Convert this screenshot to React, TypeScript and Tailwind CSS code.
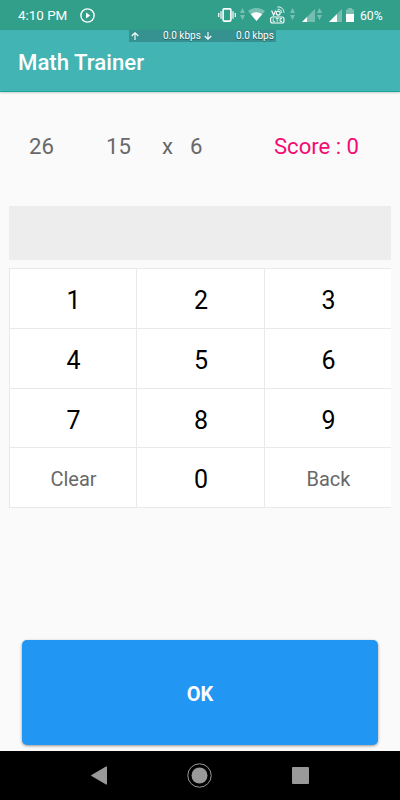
import { useState } from 'react'

const KEYS = ['1', '2', '3', '4', '5', '6', '7', '8', '9', 'Clear', '0', 'Back']

function DataArrows({ className }: { className: string }) {
  return (
    <svg viewBox="0 0 5 12" className={`h-3 w-[5px] shrink-0 text-white/35 ${className}`} fill="currentColor">
      <path d="M0 5 2.5 0 5 5zM0 7h5L2.5 12z" />
    </svg>
  )
}

function SignalIcon({ level, className }: { level: number; className: string }) {
  return (
    <svg viewBox="0 0 13 13" className={`mt-[9px] h-[13px] w-[13px] shrink-0 ${className}`} fill="#fff">
      <path d="M0 13 13 0v13z" opacity=".32" />
      <path d={`M0 13 ${level} ${13 - level}V13z`} />
    </svg>
  )
}

function StatusBar() {
  return (
    <div className="flex h-[30px] shrink-0 items-start bg-[#329f8b] text-white">
      <span className="ml-[18px] mt-[7px] w-[50px] whitespace-nowrap text-[13.4px] leading-[18px]">4:10 PM</span>
      <svg viewBox="0 0 15 15" className="ml-3 mt-[8px] h-[15px] w-[15px] shrink-0" fill="none" stroke="#fff" strokeWidth="1.4">
        <circle cx="7.5" cy="7.5" r="6.6" />
        <path d="M6 4.4v6.2l4.2-3.1z" fill="#fff" stroke="none" />
      </svg>

      {/* Vibrate */}
      <svg viewBox="0 0 18 14" className="ml-[123px] mt-2 h-[14px] w-[18px] shrink-0" fill="none" stroke="#fff" strokeWidth="1.2">
        <rect x="5.1" y=".9" width="7.8" height="12.2" rx="1" strokeWidth="1.6" />
        <path d="M.7 5v4M3 3.2v7.6M15 3.2v7.6M17.3 5v4" />
      </svg>
      <DataArrows className="ml-1 mt-2" />

      {/* Wifi */}
      <svg viewBox="0 0 17 13" className="ml-[3px] mt-[8px] h-[13px] w-[17px] shrink-0" fill="#fff">
        <path d="M0 3C5-1 12-1 17 3L8.5 13z" opacity=".35" />
        <path d="M2.8 6.2c3.5-2.7 7.9-2.7 11.4 0L8.5 13z" />
      </svg>

      {/* VoLTE */}
      <svg viewBox="0 0 15 18" className="ml-[5px] mt-[6px] h-[18px] w-[15px] shrink-0" fill="none" stroke="#fff" strokeWidth="1.1">
        <path d="M1.6 4.5 3.6 9.3 5.6 4.5" />
        <circle cx="8.2" cy="7.1" r="2" />
        <path d="M7.6 3.2c2.5-.2 4 1.3 4.2 3.7M7.4.9c4-.2 6.3 2 6.6 5.8" strokeWidth=".9" />
        <rect x=".6" y="11" width="13.4" height="6" rx="2" />
        <path d="M3.2 12.3v3.4h1.8M5.7 12.5h3M7.2 12.5v3.2M12 12.5h-2v3h2M10 14h1.6" strokeWidth=".8" />
      </svg>
      <DataArrows className="ml-[5px] mt-2" />
      <SignalIcon level={5} className="ml-[7px]" />
      <DataArrows className="ml-[2px] mt-2" />
      <SignalIcon level={8} className="ml-[7px]" />

      {/* Battery */}
      <svg viewBox="0 0 8 14" className="ml-[4px] mt-2 h-[14px] w-2 shrink-0" fill="#fff">
        <path d="M2 0h4v1.5h1.5q.5 0 .5.5v4H0V2q0-.5.5-.5H2z" opacity=".35" />
        <path d="M0 6h8v7.5q0 .5-.5.5h-7Q0 14 0 13.5z" />
      </svg>
      <span className="ml-[6px] mt-[7px] text-[12.2px] leading-[18px]">60%</span>
    </div>
  )
}

function SpeedMeter() {
  return (
    <div className="absolute left-[129px] top-[30px] flex h-3 w-[147px] items-center bg-[#359291] text-[10px] leading-3 text-white [text-shadow:0_1px_1px_#0006]">
      <svg viewBox="0 0 8 8" className="ml-[2px] h-2 w-2" fill="none" stroke="#fff" strokeWidth="1.1">
        <path d="M4 8V.8M.7 4 4 .8 7.3 4" />
      </svg>
      <span className="ml-[24px] w-[37px] whitespace-nowrap">0.0 kbps</span>
      <svg viewBox="0 0 8 8" className="ml-1 h-2 w-2" fill="none" stroke="#fff" strokeWidth="1.1">
        <path d="M4 0v7.2M.7 4 4 7.2 7.3 4" />
      </svg>
      <span className="ml-[24px] w-[37px] whitespace-nowrap">0.0 kbps</span>
    </div>
  )
}

export default function App() {
  const [answer, setAnswer] = useState('')

  const handleKey = (key: string) => {
    if (key === 'Clear') setAnswer('')
    else if (key === 'Back') setAnswer(answer.slice(0, -1))
    else setAnswer(answer + key)
  }

  return (
    <div className="relative flex h-[800px] w-[400px] flex-col overflow-hidden bg-[#fafafa] font-['Roboto',sans-serif]">
      <StatusBar />
      <header className="flex h-[62px] shrink-0 items-center border-b border-[#18a8a4] bg-[#41b4b3] pl-[18px] pt-[3px] shadow-[0_1px_2px_#0003]">
        <h1 className="text-[22.2px] font-medium leading-7 text-white">Math Trainer</h1>
      </header>
      <SpeedMeter />

      {/* Question */}
      <div className="mt-10 flex h-7 shrink-0 items-center whitespace-nowrap pl-[29px] text-[22.2px] leading-7 text-[#686868]">
        <span className="w-[77px]">26</span>
        <span className="w-[56px]">15</span>
        <span className="w-[28px]">x</span>
        <span className="w-[84px]">6</span>
        <span className="text-[22.1px] text-[#f50a72]">Score : 0</span>
      </div>

      <div className="mx-[9px] mt-[46px] flex h-[54px] shrink-0 items-center justify-center bg-[#ededed] text-2xl">
        {answer}
      </div>

      {/* Keypad */}
      <div className="mx-[9px] mt-2 grid h-[240px] shrink-0 grid-cols-[127px_128px_127px] grid-rows-[60px_60px_59px_60px] border-b border-[#e9e9e9] bg-white">
        {KEYS.map((key) => (
          <button
            key={key}
            onClick={() => handleKey(key)}
            className={`border-l border-t border-[#e9e9e9] pl-px ${
              key.length > 1 ? 'pt-[2px] text-[20px] text-[#686868]' : 'pt-[5px] text-[25px] text-black'
            }`}
          >
            {key}
          </button>
        ))}
      </div>

      <button className="mx-[22px] mt-[132px] h-[105px] shrink-0 rounded-[5px] bg-[#2196f3] pt-[2px] text-[20px] font-bold text-white shadow-[0_1px_3px_#0006]">
        OK
      </button>

      {/* Navigation bar */}
      <nav className="mt-auto flex h-[49px] shrink-0 items-center justify-between bg-black pl-[91px] pr-[91px]">
        <svg viewBox="0 0 16 19" className="h-[19px] w-4" fill="#999">
          <path d="M.5 9 15 .6Q16 .2 16 1v17q0 .8-1 .4L.5 10Q-.3 9.500.5 9z" />
        </svg>
        <svg viewBox="0 0 25 25" className="h-[25px] w-[25px]" fill="#999">
          <circle cx="12.500" cy="12.500" r="11.700" fill="none" stroke="#999" />
          <circle cx="12.500" cy="12.500" r="8" />
        </svg>
        <div className="h-[17px] w-[17px] rounded-[1px] bg-[#999]" />
      </nav>
    </div>
  )
}
